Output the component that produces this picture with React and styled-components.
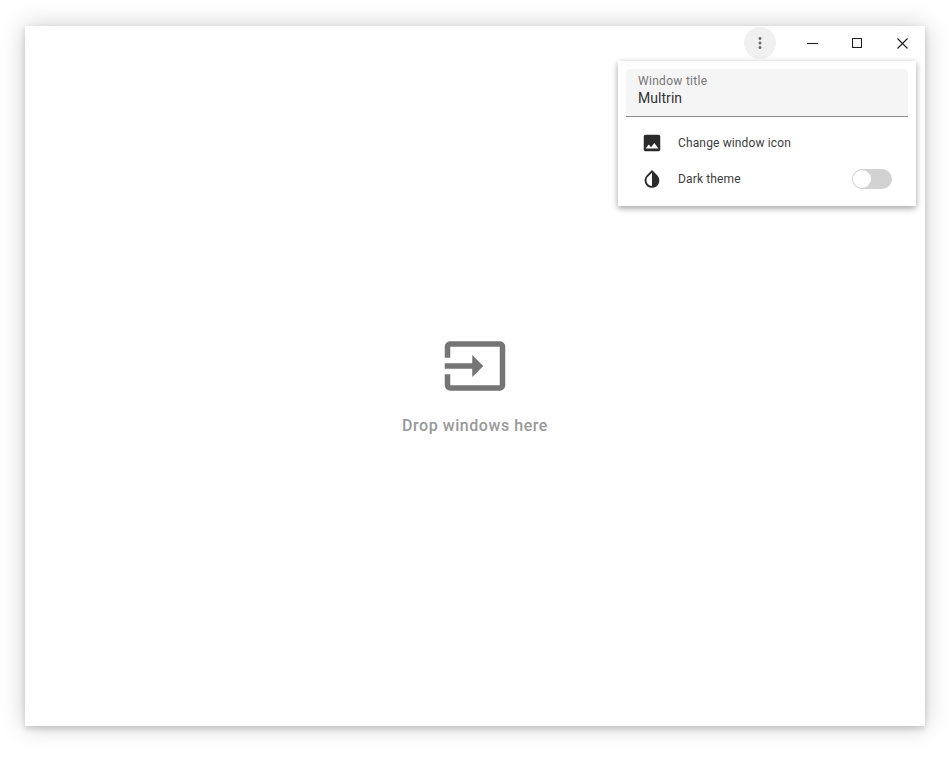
import React from 'react';
import styled, { createGlobalStyle } from 'styled-components';

const GlobalStyle = createGlobalStyle`
    html, body {
        margin: 0;
        height: 100%;
        background: #fff;
        font-family: Roboto, "Liberation Sans", sans-serif;
    }
`;

const Page = styled.div`
    padding: 26px 27px 32px 25px;
`;

const Window = styled.div`
    position: relative;
    width: 900px;
    height: 700px;
    display: flex;
    flex-direction: column;
    background: #fff;
    box-shadow: 0 3px 6px rgba(0, 0, 0, 0.16), 0 0 24px rgba(0, 0, 0, 0.2);
`;

const TitleBar = styled.div`
    height: 34px;
    flex: none;
    display: flex;
    justify-content: flex-end;
    align-items: center;
`;

const MenuButton = styled.div`
    width: 32px;
    height: 32px;
    margin-right: 14px;
    border-radius: 50%;
    background: #f0f0f0;
    display: flex;
    align-items: center;
    justify-content: center;
    color: #6e6e6e;
`;

const WindowButton = styled.div`
    width: 45px;
    height: 34px;
    display: flex;
    align-items: center;
    justify-content: center;
`;

const Main = styled.div`
    flex: 1;
    display: flex;
    flex-direction: column;
    align-items: center;
    padding-top: 273px;
`;

const DropIcon = styled.svg`
    width: 66px;
    height: 66px;
    fill: #757575;
    display: block;
`;

const DropLabel = styled.div`
    margin-top: 17px;
    font-size: 16px;
    line-height: 20px;
    font-weight: 500;
    letter-spacing: 0.55px;
    color: #999;
`;

const Popup = styled.div`
    position: absolute;
    top: 35px;
    right: 9px;
    width: 298px;
    height: 145px;
    box-sizing: border-box;
    padding: 8px;
    background: #fff;
    box-shadow: 0 3px 6px rgba(0, 0, 0, 0.24), 0 1px 6px rgba(0, 0, 0, 0.16);
`;

const Field = styled.div`
    height: 48px;
    box-sizing: border-box;
    padding: 5px 12px 0;
    background: #f5f5f5;
    border-radius: 4px 4px 0 0;
    border-bottom: 1px solid #8c8c8c;
`;

const FieldLabel = styled.div`
    font-size: 12px;
    line-height: 14px;
    letter-spacing: 0.3px;
    color: #757575;
`;

const FieldValue = styled.div`
    margin-top: 1px;
    font-size: 14px;
    line-height: 18px;
    letter-spacing: 0.05px;
    color: #333;
`;

const Menu = styled.div`
    margin-top: 8px;
`;

const MenuRow = styled.div`
    height: 36px;
    display: flex;
    align-items: center;
    padding-right: 16px;
`;

const RowIcon = styled.svg`
    width: 22px;
    height: 22px;
    margin-left: 15px;
    margin-right: 15px;
    fill: #2b2b2b;
    flex: none;
`;

const RowLabel = styled.div`
    flex: 1;
    font-size: 12px;
    letter-spacing: 0.14px;
    color: #3c3c3c;
`;

const Toggle = styled.div`
    position: relative;
    width: 40px;
    height: 20px;
    border-radius: 10px;
    background: #d2d2d2;
`;

const Knob = styled.div`
    position: absolute;
    top: 1px;
    left: 1px;
    width: 18px;
    height: 18px;
    border-radius: 50%;
    background: #fff;
`;

const Stroke = styled.svg`
    display: block;
    fill: none;
    stroke: #1f1f1f;
    stroke-width: 1.1;
`;

const MaximizeIcon = styled(Stroke)`
    margin-right: 1px;
`;

const CloseIcon = styled(Stroke)`
    margin-left: -1px;
`;

const App = () => {
    return (
        <Page>
            <GlobalStyle />
            <Window>
                <TitleBar>
                    <MenuButton>
                        <svg width="24" height="24" viewBox="0 0 24 24" fill="currentColor">
                            <path d="M12 8c1.1 0 2-.9 2-2s-.9-2-2-2-2 .9-2 2 .9 2 2 2zm0 2c-1.1 0-2 .9-2 2s.9 2 2 2 2-.9 2-2-.9-2-2-2zm0 6c-1.1 0-2 .9-2 2s.9 2 2 2 2-.9 2-2-.9-2-2-2z" transform="translate(3 3) scale(0.75)" />
                        </svg>
                    </MenuButton>
                    <WindowButton>
                        <Stroke width="11" height="11" viewBox="0 0 11 11">
                            <path d="M0 5.5h11" />
                        </Stroke>
                    </WindowButton>
                    <WindowButton>
                        <MaximizeIcon width="10" height="10" viewBox="0 0 10 10">
                            <rect x="0.5" y="0.5" width="9" height="9" />
                        </MaximizeIcon>
                    </WindowButton>
                    <WindowButton>
                        <CloseIcon width="11" height="11" viewBox="0 0 11 11">
                            <path d="M0.5 0.5l10 10M10.5 0.5l-10 10" />
                        </CloseIcon>
                    </WindowButton>
                </TitleBar>
                <Main>
                    <DropIcon viewBox="0 0 24 24">
                        <path d="M21 3.01H3c-1.1 0-2 .9-2 2V9h2V4.99h18v14.03H3V15H1v4.01c0 1.1.9 1.98 2 1.98h18c1.1 0 2-.88 2-1.98v-14c0-1.11-.9-2-2-2zM11 16l4-4-4-4v3H1v2h10v3z" />
                    </DropIcon>
                    <DropLabel>Drop windows here</DropLabel>
                </Main>
                <Popup>
                    <Field>
                        <FieldLabel>Window title</FieldLabel>
                        <FieldValue>Multrin</FieldValue>
                    </Field>
                    <Menu>
                        <MenuRow>
                            <RowIcon viewBox="0 0 24 24">
                                <path d="M21 19V5c0-1.1-.9-2-2-2H5c-1.1 0-2 .9-2 2v14c0 1.1.9 2 2 2h14c1.1 0 2-.9 2-2zM8.5 13.5l2.5 3.01L14.5 12l4.5 6H5l3.5-4.5z" />
                            </RowIcon>
                            <RowLabel>Change window icon</RowLabel>
                        </MenuRow>
                        <MenuRow>
                            <RowIcon viewBox="0 0 24 24">
                                <path d="M17.66 7.93L12 2.27 6.34 7.93c-3.12 3.12-3.12 8.19 0 11.31C7.9 20.8 9.95 21.58 12 21.58c2.05 0 4.1-.78 5.66-2.34 3.12-3.12 3.12-8.19 0-11.31zM12 19.59c-1.6 0-3.11-.62-4.24-1.76C6.62 16.69 6 15.19 6 13.59s.62-3.11 1.76-4.24L12 5.1v14.49z" />
                            </RowIcon>
                            <RowLabel>Dark theme</RowLabel>
                            <Toggle>
                                <Knob />
                            </Toggle>
                        </MenuRow>
                    </Menu>
                </Popup>
            </Window>
        </Page>
    );
};

export default App;
